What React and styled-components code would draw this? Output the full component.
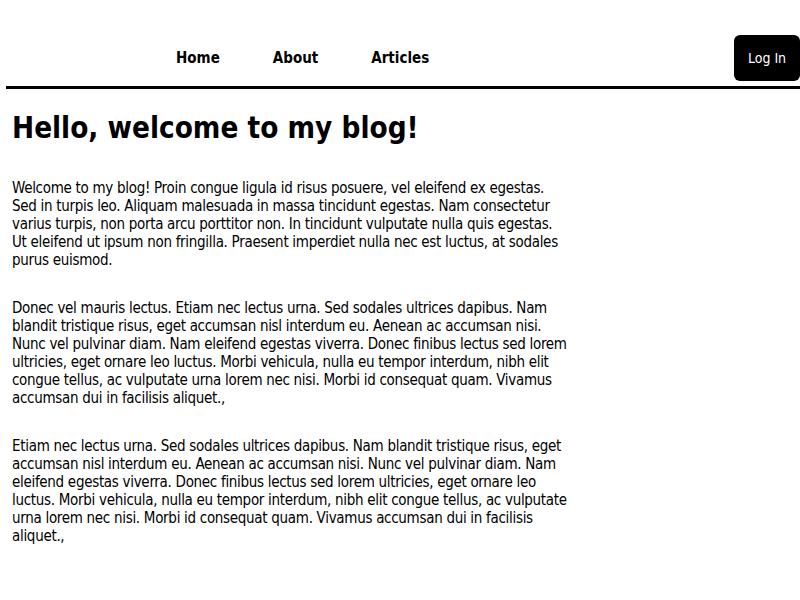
import React from 'react'
import styled, { createGlobalStyle } from 'styled-components'

const GlobalStyle = createGlobalStyle`
    body {
        margin: 0;
        background: #ffffff;
        color: #000000;
        font-family: "DejaVu Sans Condensed", "DejaVu Sans", sans-serif;
    }
`

const Page = styled.div`
    padding: 0 0 0 6px;
`

const Header = styled.header`
    display: flex;
    align-items: center;
    justify-content: space-between;
    height: 56px;
    padding-top: 30px;
    border-bottom: 3px solid #000000;
`

const Nav = styled.nav`
    display: flex;
    gap: 53px;
    padding-left: 170px;
`

const NavLink = styled.a`
    font-size: 15px;
    font-weight: 700;
    color: #000000;
    text-decoration: none;
`

const LoginButton = styled.button`
    background: #000000;
    color: #ffffff;
    border: none;
    border-radius: 6px;
    height: 46px;
    width: 66px;
    font-family: inherit;
    font-size: 14px;
    cursor: pointer;
`

const Main = styled.main`
    padding: 0 6px;
    max-width: 558px;
`

const Title = styled.h1`
    font-size: 29.4px;
    font-weight: 700;
    margin: 22px 0 34px;
`

const Paragraph = styled.p`
    font-size: 15px;
    letter-spacing: -0.3px;
    line-height: 18px;
    margin: 0 0 30px;
`

function App() {
    return (
        <>
            <GlobalStyle />
            <Page>
                <Header>
                    <Nav>
                        <NavLink href="#">Home</NavLink>
                        <NavLink href="#">About</NavLink>
                        <NavLink href="#">Articles</NavLink>
                    </Nav>
                    <LoginButton>Log In</LoginButton>
                </Header>
                <Main>
                    <Title>Hello, welcome to my blog!</Title>
                    <Paragraph>
                        Welcome to my blog! Proin congue ligula id risus posuere, vel eleifend ex egestas. Sed in turpis leo. Aliquam malesuada in massa tincidunt egestas. Nam consectetur varius turpis, non porta arcu porttitor non. In tincidunt vulputate nulla quis egestas. Ut eleifend ut ipsum non fringilla. Praesent imperdiet nulla nec est luctus, at sodales purus euismod.
                    </Paragraph>
                    <Paragraph>
                        Donec vel mauris lectus. Etiam nec lectus urna. Sed sodales ultrices dapibus. Nam blandit tristique risus, eget accumsan nisl interdum eu. Aenean ac accumsan nisi. Nunc vel pulvinar diam. Nam eleifend egestas viverra. Donec finibus lectus sed lorem ultricies, eget ornare leo luctus. Morbi vehicula, nulla eu tempor interdum, nibh elit congue tellus, ac vulputate urna lorem nec nisi. Morbi id consequat quam. Vivamus accumsan dui in facilisis aliquet.,
                    </Paragraph>
                    <Paragraph>
                        Etiam nec lectus urna. Sed sodales ultrices dapibus. Nam blandit tristique risus, eget accumsan nisl interdum eu. Aenean ac accumsan nisi. Nunc vel pulvinar diam. Nam eleifend egestas viverra. Donec finibus lectus sed lorem ultricies, eget ornare leo luctus. Morbi vehicula, nulla eu tempor interdum, nibh elit congue tellus, ac vulputate urna lorem nec nisi. Morbi id consequat quam. Vivamus accumsan dui in facilisis aliquet.,
                    </Paragraph>
                </Main>
            </Page>
        </>
    )
}

export default App
